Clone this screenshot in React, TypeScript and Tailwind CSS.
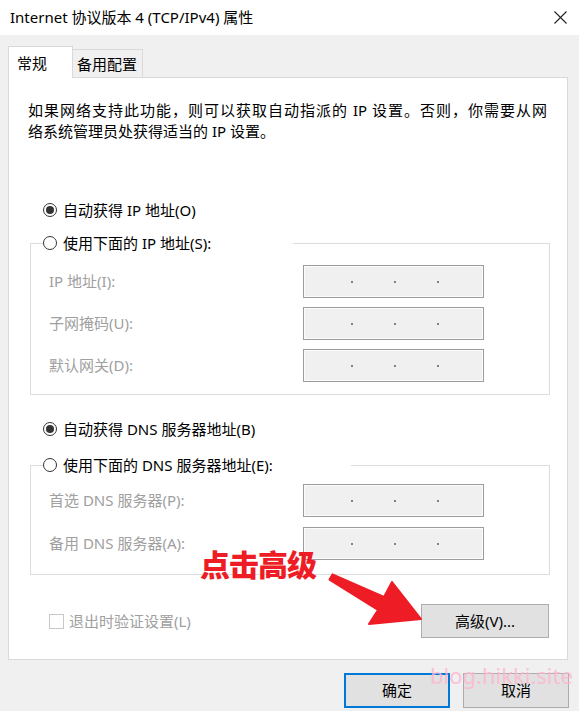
import React from "react";

const font = { fontFamily: '"Noto Sans", "Noto Sans CJK SC", sans-serif' };

function Radio({ checked, label }: { checked?: boolean; label: string }) {
  return (
    <div className="flex items-center h-[20px] text-[15px] text-black">
      <span className="w-[14px] h-[14px] rounded-full border border-[#333] bg-white flex items-center justify-center mr-[6px] shrink-0">
        {checked && <span className="w-[8px] h-[8px] rounded-full bg-[#333]" />}
      </span>
      <span className="whitespace-nowrap">{label}</span>
    </div>
  );
}

function IpBox() {
  return (
    <div className="w-[181px] h-[33px] border border-[#9c9c9c] bg-[#f0f0f0] shadow-[inset_0_0_0_1px_#fbfbfb] flex items-center pl-[47px] gap-[41px]">
      <span className="w-[2px] h-[2px] bg-[#7c7f9c]" />
      <span className="w-[2px] h-[2px] bg-[#7c7f9c]" />
      <span className="w-[2px] h-[2px] bg-[#7c7f9c]" />
    </div>
  );
}

function Field({ label }: { label: string }) {
  return (
    <div className="flex items-center">
      <span className="w-[254px] text-[15px] text-[#a0a0a0] whitespace-nowrap">{label}</span>
      <IpBox />
    </div>
  );
}

export default function App() {
  return (
    <div className="relative w-[579px] h-[711px] bg-[#f0f0f0] overflow-hidden" style={font}>
      {/* title bar */}
      <div className="h-[35px] bg-white flex items-center justify-between pl-[10px] pr-[12px]">
        <span className="text-[15px] text-black">Internet 协议版本 4 (TCP/IPv4) 属性</span>
        <svg width="13" height="13" viewBox="0 0 13 13">
          <path d="M0.5 0.5 L12.5 12.5 M12.5 0.5 L0.5 12.5" stroke="#222" strokeWidth="1.1" />
        </svg>
      </div>

      {/* tabs */}
      <div className="flex items-end ml-[8px] mt-[11px]">
        <div className="relative z-10 w-[65px] h-[32px] -mb-px bg-white border border-b-0 border-[#d9d9d9] pl-[8px] pt-[5px] text-[15px] text-black">
          常规
        </div>
        <div className="w-[70px] h-[28px] bg-[#f0f0f0] border border-l-0 border-b-0 border-[#d9d9d9] pl-[4px] pt-[3px] text-[15px] text-black">
          备用配置
        </div>
      </div>

      {/* panel */}
      <div className="ml-[8px] w-[560px] h-[583px] bg-white border border-[#d9d9d9] flex flex-col">
        <div className="mt-[22px] ml-[19px] w-[519px] text-[15px] leading-[21px] text-black">
          <div className="text-justify [text-align-last:justify]">
            如果网络支持此功能，则可以获取自动指派的 IP 设置。否则，你需要从网
          </div>
          <div>络系统管理员处获得适当的 IP 设置。</div>
        </div>

        <div className="mt-[58px] ml-[34px]">
          <Radio checked label="自动获得 IP 地址(O)" />
        </div>

        <fieldset className="mt-[13px] ml-[21px] w-[520px] border border-[#dcdcdc] p-0 pb-[12px]">
          <legend className="ml-[12px] w-[250px] p-0">
            <Radio label="使用下面的 IP 地址(S):" />
          </legend>
          <div className="mt-[12px] pl-[18px] flex flex-col gap-[9px]">
            <Field label="IP 地址(I):" />
            <Field label="子网掩码(U):" />
            <Field label="默认网关(D):" />
          </div>
        </fieldset>

        <div className="mt-[24px] ml-[34px]">
          <Radio checked label="自动获得 DNS 服务器地址(B)" />
        </div>

        <fieldset className="mt-[16px] ml-[21px] w-[520px] border border-[#dcdcdc] p-0 pb-[14px]">
          <legend className="ml-[12px] w-[308px] p-0">
            <Radio label="使用下面的 DNS 服务器地址(E):" />
          </legend>
          <div className="mt-[9px] pl-[18px] flex flex-col gap-[10px]">
            <Field label="首选 DNS 服务器(P):" />
            <Field label="备用 DNS 服务器(A):" />
          </div>
        </fieldset>

        <div className="mt-[29px] ml-[40px] mr-[18px] flex items-center justify-between">
          <div className="flex items-center">
            <span className="w-[15px] h-[15px] border border-[#c8c8c8] bg-white mr-[5px]" />
            <span className="text-[15px] text-[#a0a0a0]">退出时验证设置(L)</span>
          </div>
          <div className="w-[128px] h-[34px] bg-[#e1e1e1] border border-[#adadad] flex items-center justify-center text-[15px] text-black">
            高级(V)...
          </div>
        </div>
      </div>

      {/* dialog buttons */}
      <div className="mt-[13px] pr-[10px] flex justify-end gap-[13px]">
        <div className="w-[106px] h-[35px] bg-[#e1e1e1] border-2 border-[#0078d7] flex items-center justify-center text-[15px] text-black">
          确定
        </div>
        <div className="w-[106px] h-[35px] bg-[#e1e1e1] border border-[#adadad] flex items-center justify-center text-[15px] text-black">
          取消
        </div>
      </div>

      {/* annotation overlay */}
      <div
        className="absolute left-[200px] top-[548px] text-[30px] font-black leading-none text-[#ee1c25] tracking-[-1px]"
        style={{ fontFamily: '"Noto Sans CJK SC", sans-serif' }}
      >
        点击高级
      </div>
      <svg className="absolute left-0 top-0 pointer-events-none" width="579" height="711">
        <polygon
          points="332.5,574.4 384,597 392,582 421,619 369,624 378,610 329.5,579.6"
          fill="#ee1c25"
          stroke="#ee1c25"
          strokeWidth="2"
          strokeLinejoin="round"
        />
      </svg>

      <div className="absolute left-[430px] top-[664px] text-[22px] leading-none text-[#ffb6cf] opacity-80 pointer-events-none">
        blog.hikki.site
      </div>
    </div>
  );
}
